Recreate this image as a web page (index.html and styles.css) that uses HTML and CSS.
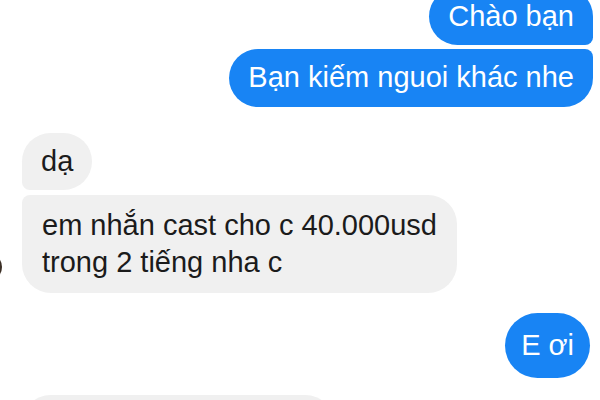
FILE: index.html
```html
<!DOCTYPE html>
<html lang="vi">
<head>
<meta charset="utf-8">
<title>Chat</title>
<link rel="stylesheet" href="styles.css">
</head>
<body>
<div class="chat">
  <div class="group out first">
    <div class="bubble blue top">Chào bạn</div>
    <div class="bubble blue bottom">Bạn kiếm nguoi khác nhe</div>
  </div>
  <div class="group in">
    <div class="avatar"></div>
    <div class="stack">
      <div class="bubble gray top">dạ</div>
      <div class="bubble gray bottom multi">em nhắn cast cho c 40.000usd<br>trong 2 tiếng nha c</div>
    </div>
  </div>
  <div class="group out single">
    <div class="bubble blue tall">E ơi</div>
  </div>
  <div class="group in last">
    <div class="avatar-space"></div>
    <div class="stack">
      <div class="bubble gray wide">&nbsp;</div>
    </div>
  </div>
</div>
</body>
</html>
```

FILE: styles.css
```css
html, body {
  margin: 0;
  padding: 0;
  background: #ffffff;
  width: 600px;
  height: 400px;
  overflow: hidden;
}

body {
  font-family: "Liberation Sans", Arial, "Noto Sans", sans-serif;
  font-size: 29px;
  color: #1b1b1b;
}

.chat {
  display: flex;
  flex-direction: column;
  margin-top: -12px;
  padding-right: 7px;
}

.group {
  display: flex;
}

.group.out {
  flex-direction: column;
  align-items: flex-end;
  gap: 4px;
}

.group.in {
  align-items: flex-end;
  gap: 20px;
  margin-top: 26px;
}

.group.single {
  margin-top: 20px;
  margin-right: 3px;
}

.group.in.last {
  margin-top: 17px;
}

.stack {
  display: flex;
  flex-direction: column;
  align-items: flex-start;
  gap: 5px;
}

.avatar {
  width: 28px;
  height: 28px;
  border-radius: 50%;
  margin-left: -26px;
  margin-bottom: 12px;
  background: radial-gradient(circle at 85% 50%, #3b2f26 0 22%, #c9b89c 55%, #f6f0e6 100%);
  flex: none;
}

.avatar-space {
  width: 28px;
  margin-left: -26px;
  flex: none;
}

.bubble {
  padding: 12px 19px;
  line-height: 33px;
  border-radius: 29px;
  white-space: nowrap;
}

.bubble.blue {
  background: #1884f4;
  color: #ffffff;
}

.bubble.gray {
  background: #f0f0f0;
  color: #1b1b1b;
}

.out .bubble.top {
  border-bottom-right-radius: 8px;
}

.out .bubble.bottom {
  border-top-right-radius: 8px;
  height: 34px;
}

.in .bubble.top {
  border-bottom-left-radius: 8px;
}

.in .bubble.bottom {
  border-top-left-radius: 8px;
}

.bubble.multi {
  line-height: 37px;
  padding: 12px 20px;
}

.bubble.tall {
  padding: 16px 16px;
  border-radius: 33px;
}

.bubble.wide {
  width: 274px;
}
```
